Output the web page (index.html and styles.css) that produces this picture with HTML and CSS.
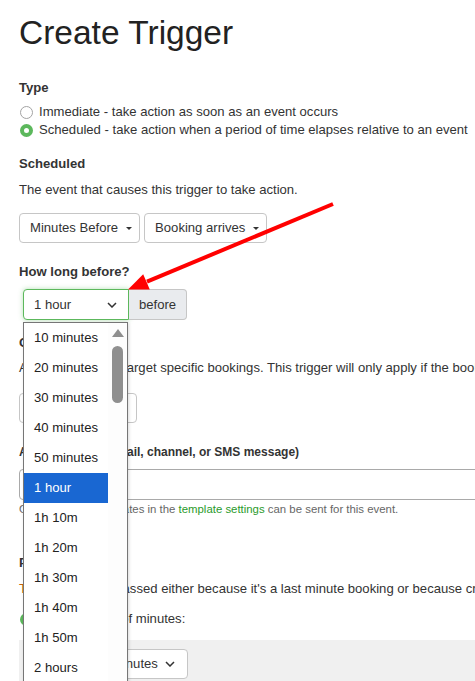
FILE: index.html
```html
<!DOCTYPE html>
<html>
<head>
<meta charset="utf-8">
<title>Create Trigger</title>
<link rel="stylesheet" href="styles.css">
</head>
<body>
<div class="page">
  <h1 class="title">Create Trigger</h1>

  <div class="label">Type</div>
  <div class="radio-group">
    <div class="radio-line"><span class="radio"></span>Immediate - take action as soon as an event occurs</div>
    <div class="radio-line"><span class="radio checked"></span>Scheduled - take action when a period of time elapses relative to an event</div>
  </div>

  <div class="label sched">Scheduled</div>
  <p class="desc">The event that causes this trigger to take action.</p>
  <div class="btn-row">
    <button class="btn">Minutes Before<span class="caret"></span></button>
    <button class="btn">Booking arrives<span class="caret"></span></button>
  </div>

  <div class="label how">How long before?</div>
  <div class="input-group">
    <div class="select focused">
      <span>1 hour</span>
      <svg class="chev" width="10" height="6" viewBox="0 0 10 6"><path d="M1 1 L5 5 L9 1" fill="none" stroke="#333" stroke-width="1.5"/></svg>
    </div>
    <div class="addon">before</div>

    <div class="dropdown">
      <ul class="options">
        <li>10 minutes</li>
        <li>20 minutes</li>
        <li>30 minutes</li>
        <li>40 minutes</li>
        <li>50 minutes</li>
        <li class="selected">1 hour</li>
        <li>1h 10m</li>
        <li>1h 20m</li>
        <li>1h 30m</li>
        <li>1h 40m</li>
        <li>1h 50m</li>
        <li>2 hours</li>
        <li>2h 10m</li>
      </ul>
      <div class="scrollbar">
        <span class="scroll-up"></span>
        <span class="thumb"></span>
      </div>
    </div>
  </div>

  <div class="label cond">Conditions</div>
  <p class="desc para">Add conditions to target specific bookings. This trigger will only apply if the booking matches all the conditions below.</p>
  <button class="btn btn-add">+ Add Condition</button>

  <div class="label small-label">Action to send (email, channel, or SMS message)</div>
  <div class="input-wide"></div>
  <p class="help">Only message templates in the <a class="link">template settings</a> can be sent for this event.</p>

  <div class="label past">Past Times</div>
  <p class="desc warn-line"><span class="warn">Tip:</span> time can be passed either because it's a last minute booking or because created late for the event.</p>
  <div class="radio-line third"><span class="radio checked"></span>Set a number of minutes:</div>

  <div class="panel">
    <div class="num">30</div>
    <div class="select small">
      <span>minutes</span>
      <svg class="chev" width="10" height="6" viewBox="0 0 10 6"><path d="M1 1 L5 5 L9 1" fill="none" stroke="#333" stroke-width="1.5"/></svg>
    </div>
  </div>
</div>

<svg class="annotation" width="475" height="681" viewBox="0 0 475 681">
  <line x1="333" y1="204" x2="147" y2="281.6" stroke="#ff0000" stroke-width="4"/>
  <polygon points="128,289.5 143.2,274.2 149.8,289.4" fill="#ff0000"/>
</svg>
</body>
</html>
```

FILE: styles.css
```css
* {
  box-sizing: border-box;
}

html,
body {
  margin: 0;
  padding: 0;
  overflow: hidden;
  background: #fff;
}

body {
  font-family: "Liberation Sans", Arial, sans-serif;
  font-size: 13.1px;
  line-height: 18px;
  color: #333;
}

.page {
  width: 1000px;
  padding: 15px 19px 0;
}

.title {
  margin: 0 0 28px;
  font-size: 33.5px;
  line-height: 36px;
  font-weight: normal;
  color: #222;
}

.label {
  font-weight: bold;
}

.radio-group {
  margin-top: 6px;
}

.radio-line {
  white-space: nowrap;
}

.radio {
  display: inline-block;
  width: 13px;
  height: 13px;
  margin: 0 6px 0 1px;
  vertical-align: -3px;
  border: 1px solid #a3a3a3;
  border-radius: 50%;
  background: #fff;
}

.radio.checked {
  border: 4px solid #5cb85c;
}

.sched {
  margin-top: 16px;
}

.desc {
  margin: 8px 0 0;
  white-space: nowrap;
}

.btn-row {
  display: flex;
  gap: 4.5px;
  margin-top: 14px;
}

.btn {
  display: inline-flex;
  align-items: center;
  height: 30px;
  padding: 0 7px 0 10px;
  border: 1px solid #c6c6c6;
  border-radius: 4px;
  background: #fff;
  font: inherit;
  color: #333;
}

.caret {
  width: 0;
  height: 0;
  margin-left: 7.5px;
  border-top: 3.5px solid #333;
  border-left: 3px solid transparent;
  border-right: 3px solid transparent;
}

.how {
  margin-top: 20px;
}

.input-group {
  position: relative;
  display: flex;
  width: max-content;
  height: 31px;
  margin: 8px 0 0 4px;
}

.select {
  display: flex;
  align-items: center;
  justify-content: space-between;
  background: #fff;
}

.select.focused {
  width: 106px;
  height: 31px;
  padding: 0 11px 0 10px;
  border: 1px solid #5cb85c;
  border-radius: 4px 0 0 4px;
  box-shadow: 0 0 5px rgba(92, 184, 92, 0.45);
}

.addon {
  display: flex;
  align-items: center;
  padding: 0 10px;
  background: #e9ebee;
  border: 1px solid #c6c6c6;
  border-left: 0;
  border-radius: 0 4px 4px 0;
}

.dropdown {
  position: absolute;
  top: 33px;
  left: 0;
  z-index: 10;
  display: flex;
  width: 105px;
  height: 400px;
  overflow: hidden;
  background: #fff;
  border: 1px solid #767676;
  box-shadow: 1px 1px 3px rgba(0, 0, 0, 0.15);
}

.options {
  width: 84px;
  margin: 0;
  padding: 0;
  list-style: none;
}

.options li {
  height: 30px;
  padding-left: 10px;
  line-height: 30px;
  white-space: nowrap;
  color: #222;
}

.options li.selected {
  background: #1967d2;
  color: #fff;
}

.scrollbar {
  display: flex;
  flex-direction: column;
  align-items: center;
  width: 19px;
  padding-top: 6px;
  background: #fdfdfd;
}

.scroll-up {
  width: 0;
  height: 0;
  border-left: 6.5px solid transparent;
  border-right: 6.5px solid transparent;
  border-bottom: 8px solid #8f8f8f;
}

.thumb {
  width: 11px;
  height: 57px;
  margin-top: 9px;
  border-radius: 6px;
  background: #8f8f8f;
}

.cond {
  margin-top: 14px;
}

.para {
  margin-top: 7px;
}

.btn-add {
  width: 118px;
  margin-top: 16px;
}

.small-label {
  margin-top: 20px;
  font-size: 12px;
  white-space: nowrap;
}

.input-wide {
  height: 31px;
  margin-top: 8px;
  border: 1px solid #a9a9a9;
  border-radius: 4px;
}

.help {
  margin: 1px 0 0;
  font-size: 11.4px;
  line-height: 16px;
  color: #666;
  white-space: nowrap;
}

.link {
  color: #2a9a2a;
  text-decoration: none;
}

.past {
  margin-top: 37px;
}

.warn-line {
  margin-top: 8px;
}

.warn {
  color: #c7650c;
}

.third {
  margin-top: 12px;
}

.panel {
  display: flex;
  gap: 4px;
  height: 80px;
  margin-top: 12px;
  padding: 9px 10px;
  background: #f0f0f0;
}

.num {
  display: flex;
  align-items: center;
  width: 68px;
  height: 30px;
  padding: 0 10px;
  border: 1px solid #c6c6c6;
  border-radius: 4px;
  background: #fff;
}

.select.small {
  width: 87px;
  height: 30px;
  padding: 0 12px 0 10px;
  border: 1px solid #c6c6c6;
  border-radius: 4px;
}

.annotation {
  position: absolute;
  top: 0;
  left: 0;
  pointer-events: none;
  z-index: 20;
}
```
